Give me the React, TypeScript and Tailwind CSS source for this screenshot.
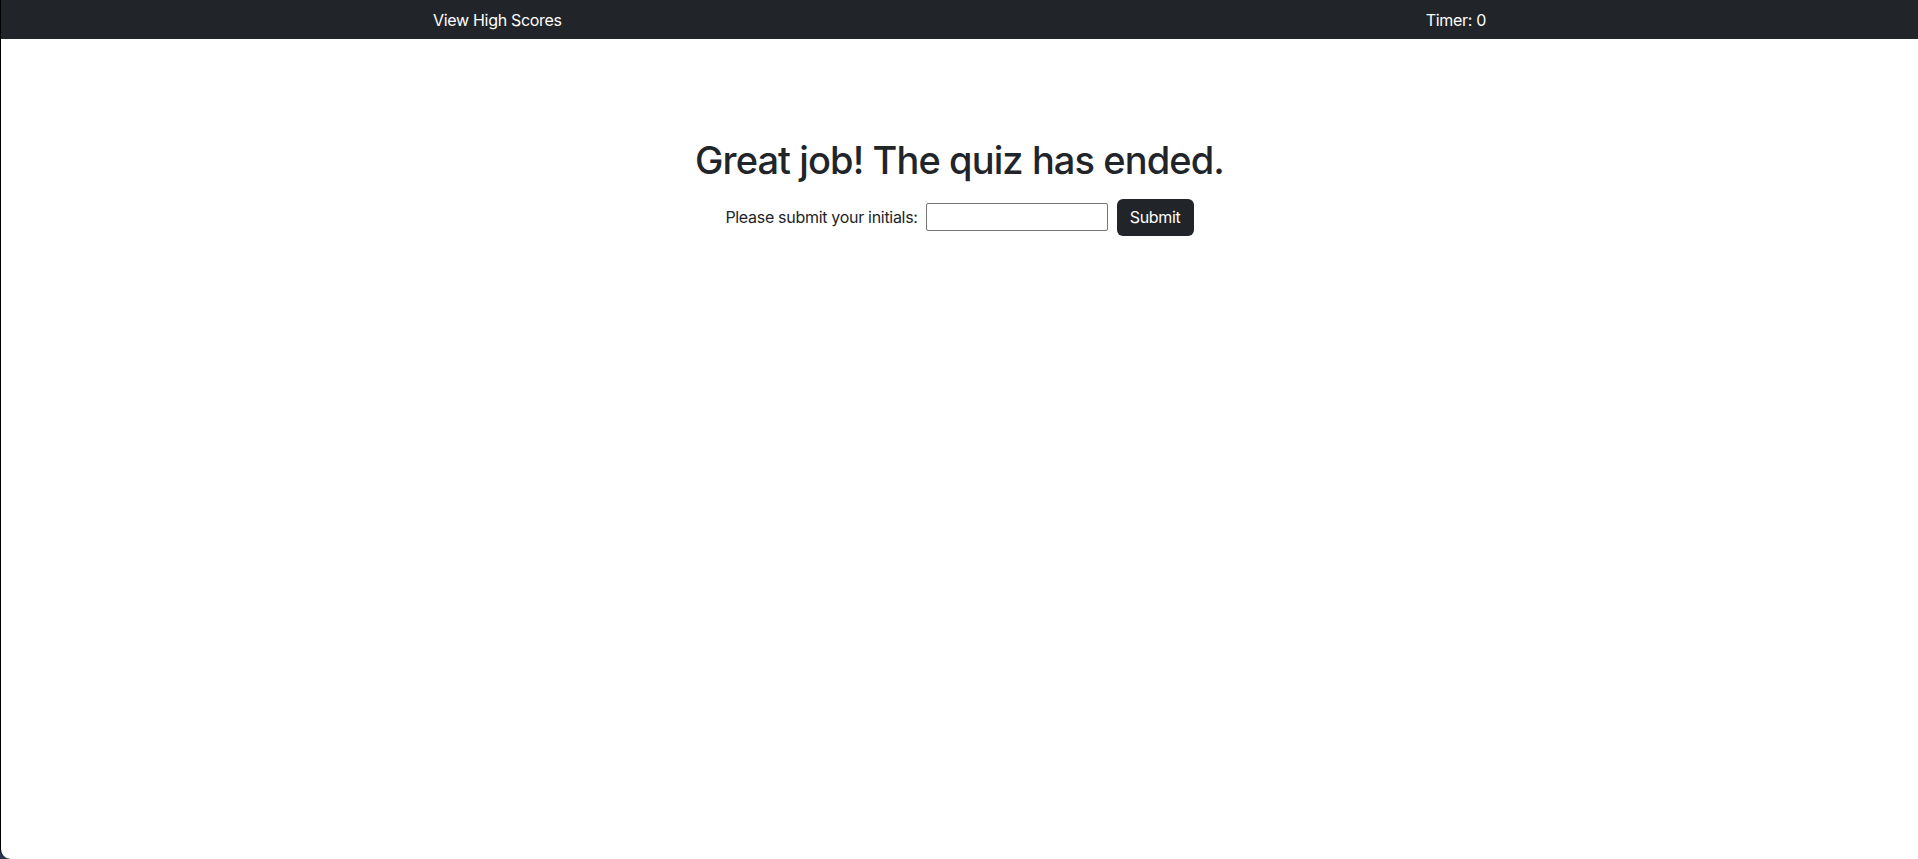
import React from "react";

export default function App() {
  return (
    <div className="h-[859px] w-full bg-[#2a3550] overflow-hidden" style={{ fontFamily: "Inter, 'Noto Sans', sans-serif" }}>
      <div className="h-full w-full bg-white border-l border-black rounded-bl-[10px] overflow-hidden flex flex-col">
        <nav className="h-[39px] bg-[#212529] flex items-center justify-around text-white text-[16px] tracking-[-0.3px]">
          <a className="cursor-pointer">View High Scores</a>
          <span>Timer: 0</span>
        </nav>
        <main className="flex flex-col items-center pt-[99px]">
          <h1 className="text-[#212529] text-[38px] leading-[1.2] font-medium tracking-[-0.9px]">Great job! The quiz has ended.</h1>
          <form className="flex items-center mt-[15px] text-[16px] text-[#212529] tracking-[-0.3px]" onSubmit={(e) => e.preventDefault()}>
            <label className="mr-[8px]">Please submit your initials:</label>
            <input type="text" className="w-[182px] h-[28px] border border-[#767676] rounded-[2px] px-1 outline-none" />
            <button type="submit" className="ml-[9px] w-[77px] h-[37px] bg-[#212529] text-white rounded-[6px] text-[16px]">Submit</button>
          </form>
        </main>
      </div>
    </div>
  );
}
